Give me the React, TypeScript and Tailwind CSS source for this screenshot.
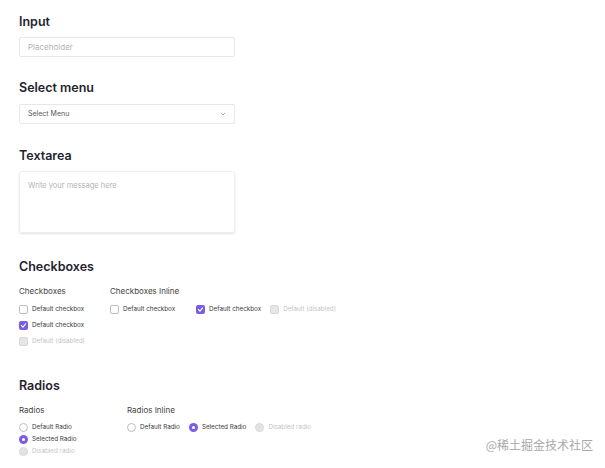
import React from "react";

const font = { fontFamily: "Inter, 'Noto Sans', sans-serif" };

function Check({ checked, disabled }: { checked?: boolean; disabled?: boolean }) {
  if (checked)
    return (
      <span className="flex h-[9px] w-[9px] items-center justify-center rounded-[2px] bg-[#7c5ce6]">
        <svg width="7" height="7" viewBox="0 0 10 10" fill="none">
          <path d="M2 5.2 L4.2 7.3 L8 2.8" stroke="white" strokeWidth="1.6" strokeLinecap="round" strokeLinejoin="round" />
        </svg>
      </span>
    );
  return (
    <span
      className={
        "h-[9px] w-[9px] rounded-[2px] border " +
        (disabled ? "border-[#d8d8d8] bg-[#e6e6e6]" : "border-[#bdbdbd] bg-white")
      }
    />
  );
}

function Radio({ checked, disabled }: { checked?: boolean; disabled?: boolean }) {
  if (checked)
    return (
      <span className="flex h-[9px] w-[9px] items-center justify-center rounded-full bg-[#7c5ce6]">
        <span className="h-[3px] w-[3px] rounded-full bg-white" />
      </span>
    );
  return (
    <span
      className={
        "h-[9px] w-[9px] rounded-full border " +
        (disabled ? "border-[#d8d8d8] bg-[#e3e3e3]" : "border-[#bdbdbd] bg-white")
      }
    />
  );
}

function Item({ kind, checked, disabled, label }: { kind: "c" | "r"; checked?: boolean; disabled?: boolean; label: string }) {
  return (
    <div className="flex items-center gap-[4px]">
      {kind === "c" ? <Check checked={checked} disabled={disabled} /> : <Radio checked={checked} disabled={disabled} />}
      <span className={"text-[6.3px] leading-[9px] " + (disabled ? "text-[#c4c4c4]" : "text-[#3a3a3a]")}>{label}</span>
    </div>
  );
}

export default function App() {
  return (
    <div className="relative h-[468px] w-[605px] overflow-hidden bg-white" style={font}>
      <div className="flex flex-col pl-[19px] pt-[14px]">
        <h2 className="text-[12.5px] font-semibold leading-[16px] text-[#1f2330]">Input</h2>
        <div className="mt-[7px] flex h-[20px] w-[216px] items-center rounded-[2px] border border-[#e5e7eb] px-[8px] text-[8px] text-[#b3b3b3]">
          Placeholder
        </div>

        <h2 className="mt-[23px] text-[12.5px] font-semibold leading-[16px] text-[#1f2330]">Select menu</h2>
        <div className="mt-[8px] flex h-[20px] w-[216px] items-center justify-between rounded-[2px] border border-[#e5e7eb] pl-[8px] pr-[8px] text-[7px] text-[#555]">
          <span>Select Menu</span>
          <svg width="6" height="4" viewBox="0 0 6 4" fill="none">
            <path d="M0.8 0.8 L3 3 L5.2 0.8" stroke="#999" strokeWidth="0.8" />
          </svg>
        </div>

        <h2 className="mt-[24px] text-[12.5px] font-semibold leading-[16px] text-[#1f2330]">Textarea</h2>
        <div className="mt-[7px] h-[62px] w-[216px] rounded-[3px] border border-[#eeeeee] px-[8px] pt-[8px] text-[7.5px] text-[#b3b3b3] shadow-[0_1px_2px_rgba(0,0,0,0.12)]">
          Write your message here
        </div>

        <h2 className="mt-[26px] text-[12.5px] font-semibold leading-[16px] text-[#1f2330]">Checkboxes</h2>
        <div className="mt-[10px] flex">
          <div className="flex w-[91px] flex-col">
            <div className="text-[8px] leading-[12px] text-[#444]">Checkboxes</div>
            <div className="mt-[8px] flex flex-col gap-[7px]">
              <Item kind="c" label="Default checkbox" />
              <Item kind="c" checked label="Default checkbox" />
              <Item kind="c" disabled label="Default (disabled)" />
            </div>
          </div>
          <div className="flex flex-col">
            <div className="text-[8px] leading-[12px] text-[#444]">Checkboxes Inline</div>
            <div className="mt-[8px] flex gap-[9px]">
              <div className="w-[77px]">
                <Item kind="c" label="Default checkbox" />
              </div>
              <Item kind="c" checked label="Default checkbox" />
              <Item kind="c" disabled label="Default (disabled)" />
            </div>
          </div>
        </div>

        <h2 className="mt-[32px] text-[12.5px] font-semibold leading-[16px] text-[#1f2330]">Radios</h2>
        <div className="mt-[10px] flex">
          <div className="flex w-[108px] flex-col">
            <div className="text-[8px] leading-[12px] text-[#444]">Radios</div>
            <div className="mt-[7px] flex flex-col gap-[3px]">
              <Item kind="r" label="Default Radio" />
              <Item kind="r" checked label="Selected Radio" />
              <Item kind="r" disabled label="Disabled radio" />
            </div>
          </div>
          <div className="flex flex-col">
            <div className="text-[8px] leading-[12px] text-[#444]">Radios Inline</div>
            <div className="mt-[7px] flex gap-[9px]">
              <Item kind="r" label="Default Radio" />
              <Item kind="r" checked label="Selected Radio" />
              <Item kind="r" disabled label="Disabled radio" />
            </div>
          </div>
        </div>
      </div>
      <div
        className="absolute bottom-[14px] right-[12px] text-[12px] text-[#a8a8a8]"
        style={{ fontFamily: "'Noto Sans CJK SC', sans-serif" }}
      >
        @稀土掘金技术社区
      </div>
    </div>
  );
}
